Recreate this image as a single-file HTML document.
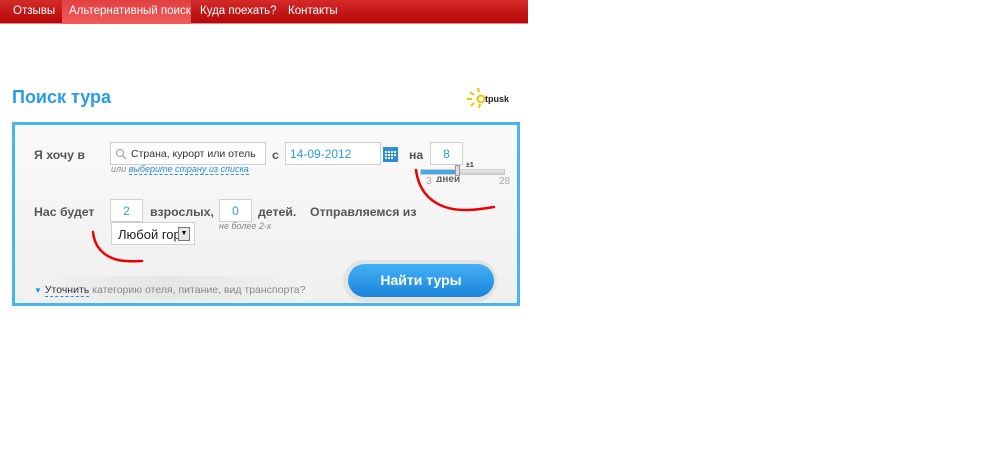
<!DOCTYPE html>
<html><head><meta charset="utf-8"><style>
*{margin:0;padding:0;box-sizing:border-box}
body{width:1000px;height:450px;background:#fff;font-family:"Liberation Sans",Arial,sans-serif;position:relative;overflow:hidden}
.a{position:absolute;white-space:nowrap}
.nav{left:0;top:0;width:528px;height:24px;background:linear-gradient(#d42a2a,#b50808);border-bottom:1px solid #e88}
.nav span{position:absolute;top:5px;color:#fff;font-size:11.5px}
.act{position:absolute;left:62px;top:0;width:129px;height:24px;background:linear-gradient(#e04040,#f25c5c)}
.lbl{font-size:12.3px;font-weight:bold;color:#555}
.inp{background:#fff;border:1px solid #d0d0d0;font-size:12px}
.sm{font-size:9px;font-style:italic;color:#888}
</style></head><body>
<div class="a nav"><div class="act"></div>
<span style="left:13px">Отзывы</span><span style="left:69px">Альтернативный поиск</span><span style="left:200px">Куда поехать?</span><span style="left:288px">Контакты</span></div>
<div class="a" style="left:12px;top:87px;font-size:18px;font-weight:bold;color:#2a9be8">Поиск тура</div>
<svg class="a" style="left:466px;top:86px" width="50" height="24"><g stroke="#f5c200" stroke-width="2"><line x1="12" y1="2" x2="13" y2="6"/><line x1="4" y1="6" x2="8" y2="9"/><line x1="1" y1="13" x2="6" y2="13"/><line x1="5" y1="20" x2="8" y2="17"/><line x1="13" y1="22" x2="14" y2="18"/></g><circle cx="15" cy="13" r="3.5" fill="none" stroke="#f5c200" stroke-width="2"/><text x="19" y="16" font-size="9" font-family="Liberation Sans" font-weight="bold" fill="#222">tpusk</text></svg>
<div class="a" style="left:12px;top:122px;width:508px;height:184px;border:3px solid #4ab4f0;background:linear-gradient(#fafafa,#efefef)"></div>
<div class="a" style="left:22px;top:276px;width:290px;height:24px;background:linear-gradient(90deg,#f2f2f2,#e6e6e6 50%,#f2f2f2)"></div>
<div class="a lbl" style="left:34px;top:148px">Я хочу в</div>
<div class="a inp" style="left:110px;top:142px;width:156px;height:23px;padding:5px 0 0 20px;color:#333;font-size:10.5px">Страна, курорт или отель</div>
<svg class="a" style="left:115px;top:148px" width="12" height="12"><circle cx="5" cy="5" r="3.5" fill="none" stroke="#aaa" stroke-width="1.3"/><line x1="8" y1="8" x2="11" y2="11" stroke="#aaa" stroke-width="1.5"/></svg>
<div class="a sm" style="left:111px;top:164px">или <span style="color:#2a8ed8;border-bottom:1px dashed #2a8ed8">выберите страну из списка</span></div>
<div class="a lbl" style="left:272px;top:148px">с</div>
<div class="a inp" style="left:285px;top:142px;width:96px;height:23px;padding:4px 0 0 4px;color:#2a9be8">14-09-2012</div>
<svg class="a" style="left:383px;top:145px" width="15" height="17"><rect x="0" y="2" width="15" height="15" fill="#2a8ed8"/><g fill="#fff"><rect x="2" y="6" width="2" height="2"/><rect x="5" y="6" width="2" height="2"/><rect x="8" y="6" width="2" height="2"/><rect x="11" y="6" width="2" height="2"/><rect x="2" y="9" width="2" height="2"/><rect x="5" y="9" width="2" height="2"/><rect x="8" y="9" width="2" height="2"/><rect x="11" y="9" width="2" height="2"/><rect x="2" y="12" width="2" height="2"/><rect x="5" y="12" width="2" height="2"/><rect x="8" y="12" width="2" height="2"/></g></svg>
<div class="a lbl" style="left:409px;top:148px">на</div>
<div class="a inp" style="left:430px;top:142px;width:33px;height:23px;padding-top:4px;text-align:center;color:#2a9be8">8</div>
<div class="a" style="left:420px;top:169px;width:85px;height:6px;background:linear-gradient(#eee,#ccc);border:1px solid #ccc"></div>
<div class="a" style="left:421px;top:170px;width:36px;height:4px;background:#4aa8e0"></div>
<div class="a" style="left:455px;top:165px;width:5px;height:11px;background:#ddd;border:1px solid #999"></div>
<div class="a" style="left:466px;top:162px;font-size:7px;font-weight:bold;color:#333">±1</div>
<div class="a" style="left:436px;top:176px;font-size:10px;font-weight:bold;color:#666;line-height:8px;height:6px;overflow:hidden">дней</div>
<div class="a" style="left:426px;top:176px;font-size:10px;color:#aaa">3</div>
<div class="a" style="left:499px;top:176px;font-size:10px;color:#aaa">28</div>
<div class="a lbl" style="left:34px;top:205px">Нас будет</div>
<div class="a inp" style="left:110px;top:199px;width:33px;height:23px;padding-top:4px;text-align:center;color:#2a9be8">2</div>
<div class="a lbl" style="left:150px;top:205px">взрослых,</div>
<div class="a inp" style="left:219px;top:199px;width:33px;height:23px;padding-top:4px;text-align:center;color:#2a9be8">0</div>
<div class="a lbl" style="left:258px;top:205px">детей.</div>
<div class="a lbl" style="left:310px;top:205px">Отправляемся из</div>
<div class="a sm" style="left:111px;top:221px">не более 4-х</div>
<div class="a sm" style="left:219px;top:221px">не более 2-х</div>
<div class="a inp" style="left:111px;top:222px;width:84px;height:23px;padding:4px 0 0 6px;font-size:13px;color:#222;overflow:hidden">Любой горо</div>
<div class="a" style="left:178px;top:227px;width:12px;height:14px;background:#e6e6e6;border:1px solid #777;font-size:7px;text-align:center;line-height:12px">▼</div>
<div class="a" style="left:343px;top:260px;width:154px;height:42px;border-radius:21px;background:#e2e2e2"></div>
<div class="a" style="left:348px;top:264px;width:146px;height:33px;border-radius:17px;background:linear-gradient(#43b0f5,#1a85dc);color:#fff;font-size:14px;font-weight:bold;text-align:center;line-height:32px">Найти туры</div>
<div class="a" style="left:34px;top:284px;font-size:10.5px;color:#888"><span style="color:#2a8ed8;font-size:8px">▼</span> <span style="color:#333;border-bottom:1px dashed #2a8ed8">Уточнить</span> категорию отеля, питание, вид транспорта?</div>
<svg class="a" style="left:0;top:0" width="520" height="270"><g fill="none" stroke="#e00" stroke-width="2.5" stroke-linecap="round"><path d="M416 170 C418 185 425 200 445 207 C460 212 475 210 494 207"/><path d="M93 232 C94 245 102 256 118 260 C128 262 136 261 142 261"/></g></svg>
</body></html>
